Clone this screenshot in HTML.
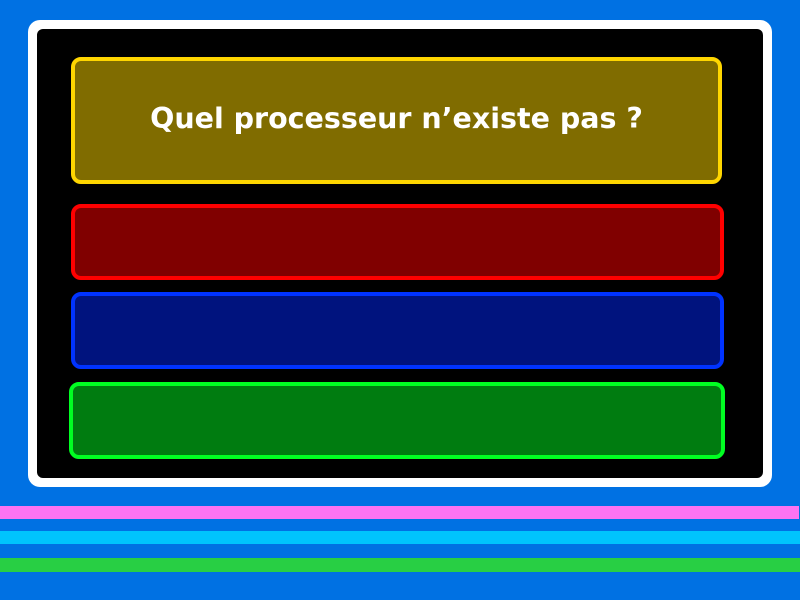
<!DOCTYPE html>
<html><head><style>
body{margin:0;width:800px;height:600px;background:#0071e3;position:relative;overflow:hidden;font-family:"DejaVu Sans","Liberation Sans",sans-serif}
div{position:absolute;box-sizing:border-box}
.o{left:28px;top:20px;width:744px;height:467px;background:#fff;border-radius:12px}
.i{left:37px;top:29px;width:726px;height:449px;background:#000;border-radius:6px}
.b{border-width:4px;border-style:solid;border-radius:10px}
</style></head><body>
<div class="o"></div><div class="i"></div>
<div class="b" style="left:71px;top:57px;width:651px;height:127px;background:#806c00;border-color:#ffd600;color:#fff;font-weight:bold;font-size:28.5px;display:flex;align-items:center;justify-content:center;padding-bottom:4px">Quel processeur n’existe pas ?</div>
<div class="b" style="left:71px;top:204px;width:653px;height:76px;background:#800000;border-color:#ff0000"></div>
<div class="b" style="left:71px;top:292px;width:653px;height:77px;background:#00137e;border-color:#0033ff"></div>
<div class="b" style="left:69px;top:382px;width:656px;height:77px;background:#007c10;border-color:#00ff22"></div>
<div style="left:0;top:506px;width:799px;height:13px;background:#fd73f2"></div>
<div style="left:0;top:531px;width:800px;height:13px;background:#00c4fd"></div>
<div style="left:0;top:558px;width:800px;height:14px;background:#28cf44"></div>
</body></html>
